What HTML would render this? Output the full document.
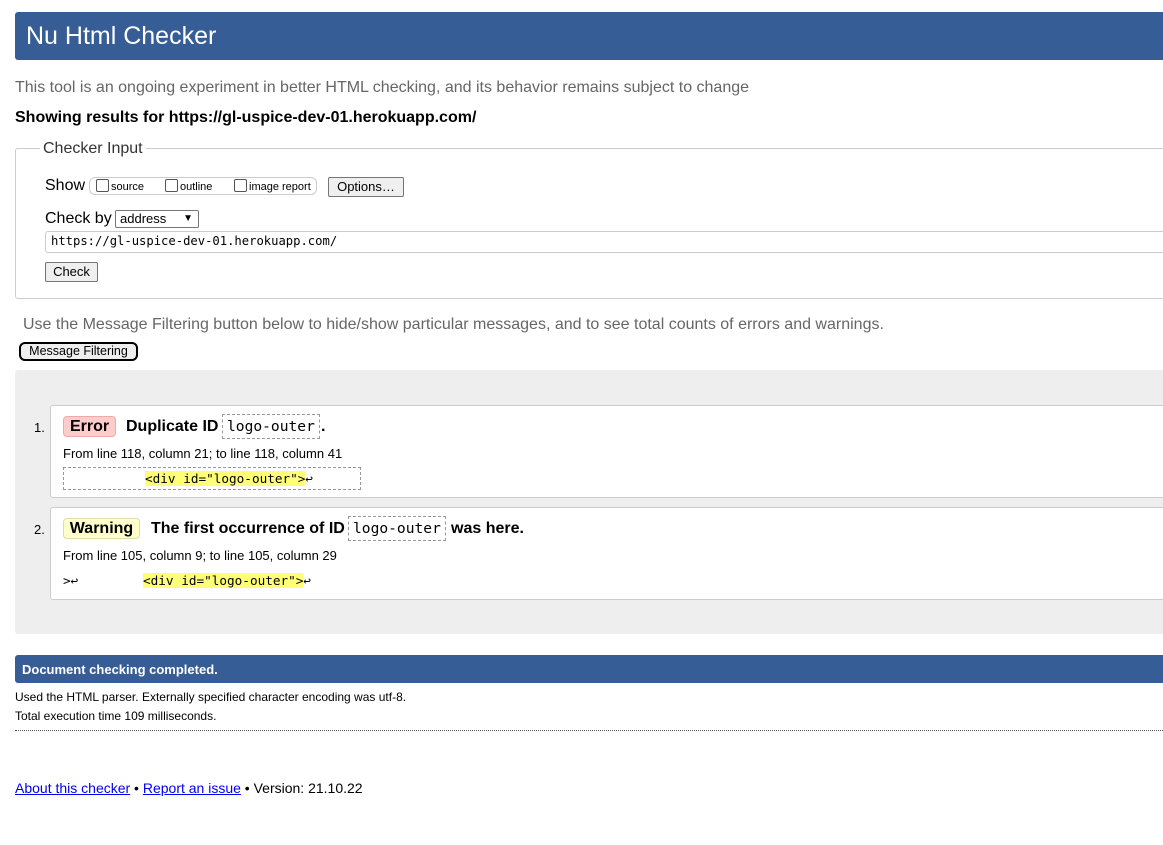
<!DOCTYPE html>
<html><head><meta charset="utf-8"><style>
body{margin:0;width:1163px;height:845px;overflow:hidden;background:#fff;font-family:"Liberation Sans",Arial,sans-serif;color:#000;position:relative}
.a{position:absolute;white-space:nowrap}
.mono{font-family:"DejaVu Sans Mono","Liberation Mono",monospace}
.cb{display:inline-block;width:11px;height:11px;border:1px solid #555;border-radius:2px;vertical-align:-2px;margin-right:2px;background:#fff}
.btn{position:absolute;background:#efefef;border:1px solid #767676;border-radius:2px;font-size:13px;text-align:center;box-sizing:border-box}
.code{border:1px dashed #999;padding:2px 4px;font-size:14.6px}
.hl{background:#ffff77}
</style></head><body>
<div class="a" style="left:15px;top:12px;width:1148px;height:48px;background:#365d95;border-radius:3px 0 0 3px"></div>
<div class="a" style="left:26px;top:22px;font-size:25px;color:#fff">Nu Html Checker</div>
<div class="a" style="left:15px;top:79px;font-size:16px;color:#666">This tool is an ongoing experiment in better HTML checking, and its behavior remains subject to change</div>
<div class="a" style="left:15px;top:109px;font-size:16px;font-weight:bold">Showing results for https://gl-uspice-dev-01.herokuapp.com/</div>

<div class="a" style="left:15px;top:148px;width:1160px;height:151px;border:1px solid #ccc;border-radius:3px;box-sizing:border-box"></div>
<div class="a" style="left:40px;top:140px;background:#fff;padding:0 3px;font-size:16px;color:#333">Checker Input</div>
<div class="a" style="left:45px;top:177px;font-size:16px">Show</div>
<div class="a" style="left:89px;top:177px;width:228px;height:18px;border:1px solid #ccc;border-radius:6px;box-sizing:border-box"></div>
<div class="a" style="left:96px;top:179px;font-size:11px"><span class="cb"></span>source</div>
<div class="a" style="left:165px;top:179px;font-size:11px"><span class="cb"></span>outline</div>
<div class="a" style="left:234px;top:179px;font-size:11px"><span class="cb"></span>image report</div>
<div class="btn" style="left:328px;top:177px;width:76px;height:20px;line-height:18px">Options…</div>
<div class="a" style="left:45px;top:210px;font-size:16px">Check by</div>
<div class="a" style="left:115px;top:210px;width:84px;height:18px;border:1px solid #767676;border-radius:2px;box-sizing:border-box;font-size:13px;padding-left:4px;line-height:16px">address<span style="position:absolute;right:5px;top:0;font-size:10px">&#9660;</span></div>
<div class="a" style="left:45px;top:231px;width:1130px;height:22px;border:1px solid #ccc;border-radius:3px;box-sizing:border-box"></div>
<div class="a mono" style="left:51px;top:234px;font-size:12.2px">https://gl-uspice-dev-01.herokuapp.com/</div>
<div class="btn" style="left:45px;top:262px;width:53px;height:20px;line-height:18px">Check</div>

<div class="a" style="left:23px;top:316px;font-size:16px;color:#666">Use the Message Filtering button below to hide/show particular messages, and to see total counts of errors and warnings.</div>
<div class="a" style="left:19px;top:342px;width:119px;height:19px;border:2px solid #000;border-radius:6px;box-sizing:border-box;background:#efefef;font-size:12.5px;text-align:center;line-height:15px">Message Filtering</div>

<div class="a" style="left:15px;top:370px;width:1148px;height:264px;background:#eee;border-radius:3px 0 0 3px"></div>
<div class="a" style="left:50px;top:405px;width:1120px;height:93px;background:#fff;border:1px solid #ccc;border-radius:3px;box-sizing:border-box"></div>
<div class="a" style="left:50px;top:507px;width:1120px;height:93px;background:#fff;border:1px solid #ccc;border-radius:3px;box-sizing:border-box"></div>

<div class="a" style="left:34px;top:420px;font-size:13px">1.</div>
<div class="a" style="left:63px;top:416px;width:53px;height:21px;background:#fcc;border:1px solid #eaa;border-radius:4px;box-sizing:border-box;font-weight:bold;font-size:16px;text-align:center;line-height:19px">Error</div>
<div class="a" style="left:126px;top:418px;font-size:16px;font-weight:bold">Duplicate ID</div>
<div class="a mono code" style="left:222px;top:414px;height:19px;line-height:19px">logo-outer</div>
<div class="a" style="left:321px;top:418px;font-size:16px;font-weight:bold">.</div>
<div class="a" style="left:63px;top:446px;font-size:13px">From line 118, column 21; to line 118, column 41</div>
<div class="a" style="left:63px;top:467px;width:298px;height:23px;border:1px dashed #999;box-sizing:border-box"></div>
<div class="a mono" style="left:145px;top:471px;font-size:12.7px"><span class="hl">&lt;div id="logo-outer"&gt;</span>↩</div>

<div class="a" style="left:34px;top:522px;font-size:13px">2.</div>
<div class="a" style="left:63px;top:518px;width:77px;height:21px;background:#ffc;border:1px solid #dda;border-radius:4px;box-sizing:border-box;font-weight:bold;font-size:16px;text-align:center;line-height:19px">Warning</div>
<div class="a" style="left:151px;top:520px;font-size:16px;font-weight:bold">The first occurrence of ID</div>
<div class="a mono code" style="left:348px;top:516px;height:19px;line-height:19px">logo-outer</div>
<div class="a" style="left:451px;top:520px;font-size:16px;font-weight:bold">was here.</div>
<div class="a" style="left:63px;top:548px;font-size:13px">From line 105, column 9; to line 105, column 29</div>
<div class="a mono" style="left:63px;top:573px;font-size:12.7px">&gt;↩</div>
<div class="a mono" style="left:143px;top:573px;font-size:12.7px"><span class="hl">&lt;div id="logo-outer"&gt;</span>↩</div>

<div class="a" style="left:15px;top:655px;width:1148px;height:28px;background:#365d95;border-radius:3px 0 0 3px"></div>
<div class="a" style="left:22px;top:662px;font-size:13px;font-weight:bold;color:#fff">Document checking completed.</div>
<div class="a" style="left:15px;top:690px;font-size:12px">Used the HTML parser. Externally specified character encoding was utf-8.</div>
<div class="a" style="left:15px;top:709px;font-size:12px">Total execution time 109 milliseconds.</div>
<div class="a" style="left:15px;top:730px;width:1148px;border-top:1px dotted #555"></div>
<div class="a" style="left:15px;top:780px;font-size:14px"><span style="color:#00e;text-decoration:underline">About this checker</span> • <span style="color:#00e;text-decoration:underline">Report an issue</span> • Version: 21.10.22</div>
</body></html>
